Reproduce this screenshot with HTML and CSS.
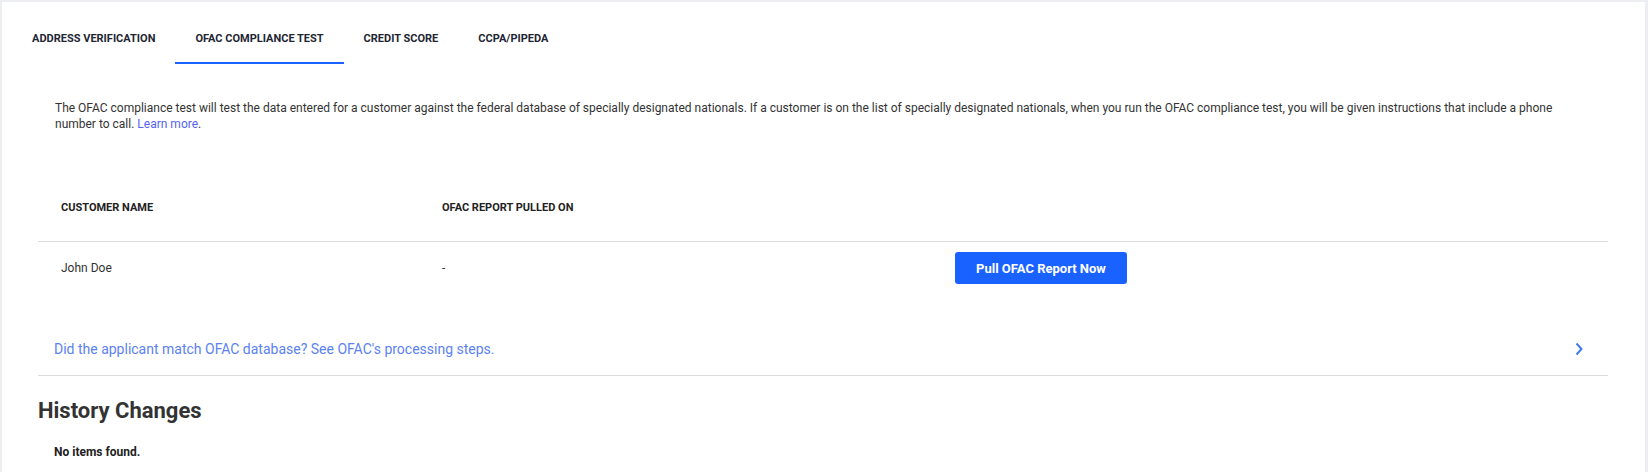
FILE: index.html
```html
<!DOCTYPE html>
<html lang="en">
<head>
<meta charset="utf-8">
<title>OFAC Compliance Test</title>
<link rel="stylesheet" href="styles.css">
</head>
<body>
<div class="card">
  <nav class="tabs">
    <a class="tab">ADDRESS VERIFICATION</a>
    <a class="tab active">OFAC COMPLIANCE TEST</a>
    <a class="tab">CREDIT SCORE</a>
    <a class="tab">CCPA/PIPEDA</a>
  </nav>
  <div class="content">
    <p class="desc">The OFAC compliance test will test the data entered for a customer against the federal database of specially designated nationals. If a customer is on the list of specially designated nationals, when you run the OFAC compliance test, you will be given instructions that include a phone number to call. <a class="learn">Learn more</a>.</p>
    <div class="table">
      <div class="row head">
        <div class="cell">CUSTOMER NAME</div>
        <div class="cell">OFAC REPORT PULLED ON</div>
        <div class="cell"></div>
      </div>
      <div class="row body">
        <div class="cell">John Doe</div>
        <div class="cell">-</div>
        <div class="cell"><button class="btn">Pull OFAC Report Now</button></div>
      </div>
    </div>
    <div class="accordion">
      <span class="acc-text">Did the applicant match OFAC database? See OFAC's processing steps.</span>
      <svg class="chev" width="10" height="14" viewBox="0 0 10 14"><path d="M2.5 1.5 L7.5 7 L2.5 12.5" fill="none" stroke="#3f7cf4" stroke-width="2"/></svg>
    </div>
    <h2 class="history">History Changes</h2>
    <p class="empty">No items found.</p>
  </div>
</div>
</body>
</html>
```

FILE: styles.css
```css
html, body {
  margin: 0;
  padding: 0;
  height: 100%;
}
body {
  background: #eceef1;
  font-family: Roboto, "Liberation Sans", Arial, sans-serif;
  color: #333;
  overflow: hidden;
}
.card {
  background: #fff;
  margin: 2px 3px 0 2px;
  height: calc(100% - 2px);
  box-sizing: border-box;
  padding-top: 10px;
}
.tabs {
  display: flex;
  padding-left: 10px;
  height: 52px;
}
.tab {
  display: block;
  padding: 4px 20px 0;
  height: 46px;
  line-height: 46px;
  font-size: 11px;
  font-weight: 700;
  color: #1e2633;
  border-bottom: 2px solid transparent;
  white-space: nowrap;
}
.tab.active {
  border-bottom-color: #1a62ff;
}
.content {
  padding: 0 37px 0 36px;
}
.desc {
  margin: 36px 0 0;
  padding: 0 17px;
  font-size: 12px;
  line-height: 16px;
  color: #333;
}
.learn {
  color: #5563f2;
}
.table {
  margin-top: 44px;
}
.row {
  display: grid;
  grid-template-columns: 381px 513px 1fr;
  align-items: center;
}
.row.head {
  padding: 24px 0 25px;
  border-bottom: 1px solid #dcdcdc;
}
.row.head .cell {
  font-size: 11px;
  font-weight: 700;
  line-height: 16px;
  color: #222;
}
.cell {
  padding-left: 23px;
}
.row.body {
  padding: 10px 0;
}
.row.body .cell {
  font-size: 12px;
  line-height: 16px;
  color: #333;
}
.btn {
  display: block;
  height: 32px;
  width: 172px;
  background: #1a62ff;
  color: #fff;
  border: 0;
  border-radius: 3px;
  font-family: Roboto, "Liberation Sans", Arial, sans-serif;
  font-size: 13px;
  font-weight: 700;
  padding: 0;
}
.accordion {
  margin-top: 29px;
  padding: 16px 24px 16px 16px;
  border-bottom: 1px solid #dcdcdc;
  display: flex;
  align-items: center;
  justify-content: space-between;
}
.acc-text {
  font-size: 14px;
  line-height: 20px;
  color: #5b82ef;
}
.chev {
  display: block;
}
.history {
  margin: 22px 0 0;
  font-size: 22px;
  line-height: 26px;
  font-weight: 700;
  color: #333;
}
.empty {
  margin: 20px 0 0;
  padding-left: 16px;
  font-size: 12px;
  line-height: 16px;
  font-weight: 700;
  color: #222;
}
```
